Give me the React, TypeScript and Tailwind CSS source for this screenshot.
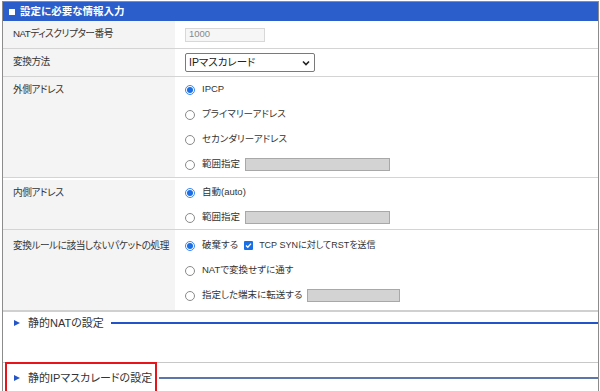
import React from 'react';

const Radio: React.FC<{ checked?: boolean }> = ({ checked }) =>
  checked ? (
    <span className="w-[10px] h-[10px] rounded-full border border-[#3d86ec] bg-white flex items-center justify-center shrink-0">
      <span className="w-[6px] h-[6px] rounded-full bg-[#1a6ee6]" />
    </span>
  ) : (
    <span className="w-[10px] h-[10px] rounded-full border border-[#8a8a8a] bg-white shrink-0" />
  );

const Option: React.FC<{ checked?: boolean; children: React.ReactNode }> = ({ checked, children }) => (
  <div className="h-[25px] flex items-center whitespace-nowrap">
    <Radio checked={checked} />
    <span className="ml-[7px] flex items-center">{children}</span>
  </div>
);

const GrayBox: React.FC<{ w: string }> = ({ w }) => (
  <span className={`${w} ml-[5px] h-[13px] bg-[#d3d3d3] border border-[#a8a8a8] inline-block`} />
);

const Row: React.FC<{ label: string; className?: string; children: React.ReactNode }> = ({ label, className, children }) => (
  <div className={`flex border-b border-[#d4d4d4] ${className ?? ''}`}>
    <div className="w-[172px] shrink-0 bg-[#f4f4f4] pl-[10px] text-[9.7px] tracking-[-0.05em] text-[#333] leading-[25px] whitespace-nowrap overflow-hidden">
      {label}
    </div>
    <div className="flex-1 pl-[10px] text-[9.5px] text-[#333]">{children}</div>
  </div>
);

const SectionHead: React.FC<{ title: string; line: string }> = ({ title, line }) => (
  <div className="h-[22px] flex items-center pl-[10px]">
    <span className="w-0 h-0 border-y-[3.5px] border-y-transparent border-l-[6px] border-l-[#2456c8] ml-[1px]" />
    <span className="ml-[8px] text-[11px] text-[#333] whitespace-nowrap">{title}</span>
    <span className={`flex-1 ml-[7px] ${line}`} />
  </div>
);

const App: React.FC = () => {
  return (
    <div className="w-[600px] h-[391px] bg-white overflow-hidden relative font-['Liberation_Sans','Noto_Sans_CJK_JP',sans-serif] [font-feature-settings:'palt']">
      <div className="ml-[2px] mr-[1px] mt-[1px] border-x border-t border-[#8c8c8c] h-[400px]">
        <div className="h-[19px] bg-[#2b5dcb] flex items-center pl-[6px]">
          <span className="w-[6px] h-[6px] bg-white" />
          <span className="ml-[5px] text-white font-bold text-[10.5px]">設定に必要な情報入力</span>
        </div>

        <Row label="NATディスクリプター番号" className="h-[28px] items-stretch">
          <div className="h-full flex items-center">
            <div className="w-[80px] h-[14px] border border-[#d8d8d8] bg-[#f6f6f6] text-[#888] pl-[3px] flex items-center text-[9.5px]">
              1000
            </div>
          </div>
        </Row>

        <Row label="変換方法" className="h-[28px]">
          <div className="h-full flex items-center">
            <div className="w-[130px] h-[19px] border border-[#7a7a7a] rounded-[2px] bg-white flex items-center justify-between pl-[3px] pr-[4px] text-[10.5px] text-[#222]">
              <span>IPマスカレード</span>
              <svg width="8" height="6" viewBox="0 0 8 6">
                <path d="M1 1.5 L4 4.5 L7 1.5" fill="none" stroke="#222" strokeWidth="1.6" />
              </svg>
            </div>
          </div>
        </Row>

        <Row label="外側アドレス" className="h-[101px]">
          <Option checked>IPCP</Option>
          <Option>プライマリーアドレス</Option>
          <Option>セカンダリーアドレス</Option>
          <Option>
            範囲指定
            <GrayBox w="w-[145px]" />
          </Option>
        </Row>

        <Row label="内側アドレス" className="h-[52px] pt-[2px]">
          <Option checked>自動(auto)</Option>
          <Option>
            範囲指定
            <GrayBox w="w-[145px]" />
          </Option>
        </Row>

        <div className="flex border-b-2 border-[#d0d0d0] h-[82px]">
          <div className="w-[172px] shrink-0 bg-[#f4f4f4] pl-[10px] text-[9.7px] tracking-[-0.05em] text-[#333] leading-[25px] pt-[3px] whitespace-nowrap overflow-hidden">
            変換ルールに該当しないパケットの処理
          </div>
          <div className="flex-1 pl-[10px] text-[9.5px] text-[#333] pt-[3px]">
            <Option checked>
              破棄する
              <span className="ml-[6px] w-[9px] h-[9px] rounded-[1px] bg-[#1a6ee6] flex items-center justify-center">
                <svg width="7" height="7" viewBox="0 0 7 7">
                  <path d="M1 3.6 L2.8 5.3 L6 1.6" fill="none" stroke="#fff" strokeWidth="1.4" />
                </svg>
              </span>
              <span className="ml-[6px] text-[9px]">TCP SYNに対してRSTを送信</span>
            </Option>
            <Option>NATで変換せずに通す</Option>
            <Option>
              指定した端末に転送する
              <GrayBox w="w-[93px]" />
            </Option>
          </div>
        </div>

        <div className="h-[51px] border-b border-[#c8c8c8]">
          <SectionHead title="静的NATの設定" line="h-[1.5px] bg-[#2254c8]" />
        </div>

        <div className="pt-[4px]">
          <SectionHead title="静的IPマスカレードの設定" line="h-[2px] bg-[#5d75a8]" />
        </div>
      </div>

      <div className="absolute left-[5px] top-[362px] w-[152px] h-[40px] border-[2.5px] border-[#e8141c]" />
    </div>
  );
};

export default App;
